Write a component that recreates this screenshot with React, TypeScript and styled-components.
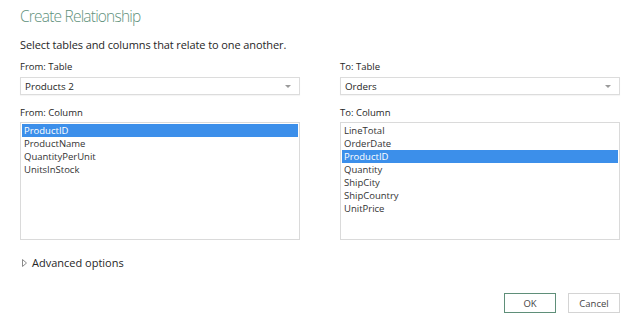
import styled, { createGlobalStyle } from 'styled-components';

const GlobalStyle = createGlobalStyle`
  html, body {
    margin: 0;
    padding: 0;
    background: #fff;
  }
  body {
    font-family: 'Open Sans', 'Noto Sans', sans-serif;
    color: #262626;
  }
`;

const Dialog = styled.div`
  width: 640px;
  height: 326px;
  padding: 0 20px;
  box-sizing: border-box;
  display: flex;
  flex-direction: column;
`;

const Title = styled.h1`
  margin: 4px 0 0;
  font-size: 15.5px;
  letter-spacing: -0.8px;
  line-height: 24px;
  font-weight: 300;
  color: #5f917c;
`;

const Subtitle = styled.p`
  margin: 9px 0 0;
  font-size: 11px;
  letter-spacing: -0.1px;
  line-height: 16px;
`;

const Columns = styled.div`
  display: grid;
  grid-template-columns: 280px 280px;
  column-gap: 40px;
  margin-top: 7px;
`;

const Field = styled.div`
  display: flex;
  flex-direction: column;
`;

const Label = styled.label<{ $gap?: number }>`
  margin-top: ${({ $gap }) => $gap ?? 0}px;
  font-size: 9.5px;
  line-height: 14px;
`;

const Select = styled.div`
  margin-top: 3px;
  height: 18px;
  box-sizing: border-box;
  border: 1px solid #dcdcdc;
  box-shadow: 0 1px 1px rgba(0, 0, 0, 0.04);
  display: flex;
  align-items: center;
  justify-content: space-between;
  padding: 0 6px 0 4px;
  font-size: 9.8px;
`;

const Caret = styled.span`
  width: 0;
  height: 0;
  border-left: 3.5px solid transparent;
  border-right: 3.5px solid transparent;
  border-top: 3.5px solid #9a9a9a;
  margin-right: 2px;
`;

const List = styled.ul`
  margin: 2px 0 0;
  padding: 1px 1px;
  list-style: none;
  height: 118px;
  box-sizing: border-box;
  border: 1px solid #dadada;
`;

const Item = styled.li<{ $selected?: boolean }>`
  height: 13px;
  line-height: 13px;
  padding-left: 2px;
  font-size: 9.5px;
  color: ${({ $selected }) => ($selected ? '#fff' : '#333')};
  background: ${({ $selected }) => ($selected ? '#3c8fea' : 'transparent')};
`;

const Advanced = styled.div`
  margin-top: 15px;
  display: flex;
  align-items: center;
  gap: 5px;
  font-size: 11px;
  line-height: 16px;
  padding-left: 2px;
`;

const Triangle = styled.svg`
  width: 5px;
  height: 8px;
  flex-shrink: 0;
`;

const Footer = styled.div`
  margin-top: 22px;
  display: flex;
  justify-content: flex-end;
  gap: 12px;
`;

const Button = styled.button<{ $primary?: boolean }>`
  width: 52px;
  height: 20px;
  padding: 0;
  background: #fff;
  border: 1px solid ${({ $primary }) => ($primary ? '#5f8f79' : '#d4d4d4')};
  font-family: inherit;
  font-size: 9.5px;
  color: #444;
`;

const fromColumns = ['ProductID', 'ProductName', 'QuantityPerUnit', 'UnitsInStock'];
const toColumns = ['LineTotal', 'OrderDate', 'ProductID', 'Quantity', 'ShipCity', 'ShipCountry', 'UnitPrice'];

const App = () => {
  return (
    <>
      <GlobalStyle />
      <Dialog>
        <Title>Create Relationship</Title>
        <Subtitle>Select tables and columns that relate to one another.</Subtitle>
        <Columns>
          <Field>
            <Label>From: Table</Label>
            <Select>
              Products 2
              <Caret />
            </Select>
            <Label $gap={11}>From: Column</Label>
            <List>
              {fromColumns.map((c) => (
                <Item key={c} $selected={c === 'ProductID'}>
                  {c}
                </Item>
              ))}
            </List>
          </Field>
          <Field>
            <Label>To: Table</Label>
            <Select>
              Orders
              <Caret />
            </Select>
            <Label $gap={11}>To: Column</Label>
            <List>
              {toColumns.map((c) => (
                <Item key={c} $selected={c === 'ProductID'}>
                  {c}
                </Item>
              ))}
            </List>
          </Field>
        </Columns>
        <Advanced>
          <Triangle viewBox="0 0 5 8">
            <path d="M0.5 0.5 L4.5 4 L0.5 7.5 Z" fill="none" stroke="#8a8a8a" strokeWidth="1" />
          </Triangle>
          Advanced options
        </Advanced>
        <Footer>
          <Button $primary>OK</Button>
          <Button>Cancel</Button>
        </Footer>
      </Dialog>
    </>
  );
};

export default App;
